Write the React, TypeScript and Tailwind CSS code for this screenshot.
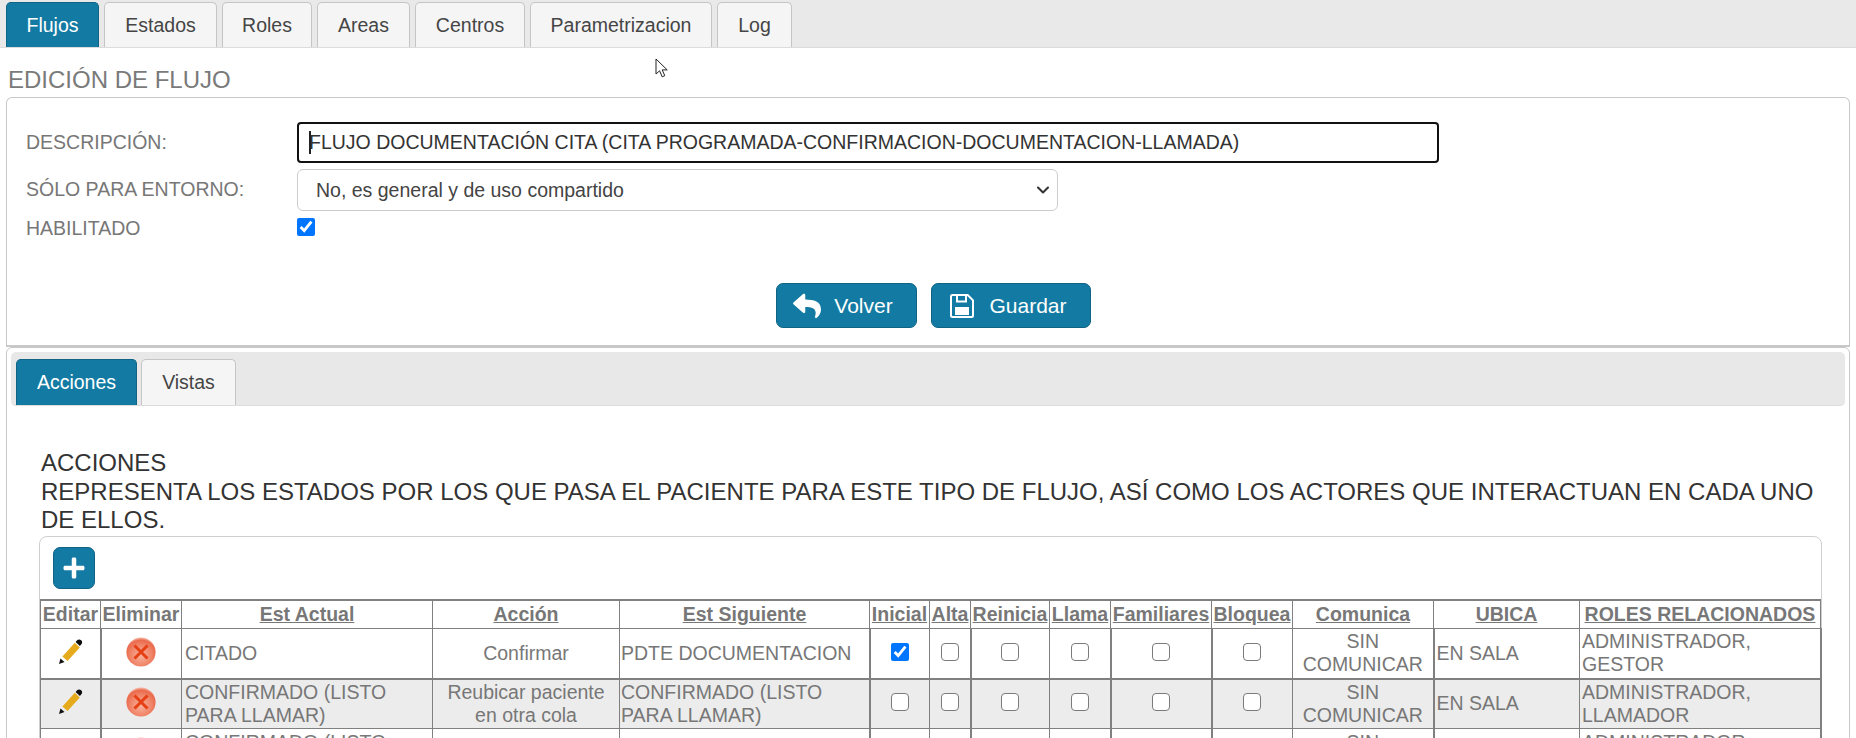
import { ChevronDown } from "lucide-react";
import { FaPlus, FaReply } from "react-icons/fa";

const mainTabs = [
  { label: "Flujos", width: "w-[93px]" },
  { label: "Estados", width: "w-[113px]" },
  { label: "Roles", width: "w-[90px]" },
  { label: "Areas", width: "w-[93px]" },
  { label: "Centros", width: "w-[110px]" },
  { label: "Parametrizacion", width: "w-[182px]" },
  { label: "Log", width: "w-[75px]" },
];

const columns = [
  { label: "Editar", width: "w-[60px]", line: false },
  { label: "Eliminar", width: "w-[81px]", line: false },
  { label: "Est Actual", width: "w-[251px]", line: true },
  { label: "Acción", width: "w-[187px]", line: true },
  { label: "Est Siguiente", width: "w-[250px]", line: true },
  { label: "Inicial", width: "w-[60px]", line: true },
  { label: "Alta", width: "w-[41px]", line: true },
  { label: "Reinicia", width: "w-[79px]", line: true },
  { label: "Llama", width: "w-[61px]", line: true },
  { label: "Familiares", width: "w-[101px]", line: true },
  { label: "Bloquea", width: "w-[81px]", line: true },
  { label: "Comunica", width: "w-[141px]", line: true },
  { label: "UBICA", width: "w-[146px]", line: true },
  { label: "ROLES RELACIONADOS", width: "w-[241px]", line: true },
];

const rows = [
  {
    actual: "CITADO",
    accion: "Confirmar",
    siguiente: "PDTE DOCUMENTACION",
    inicial: true,
    roles: "ADMINISTRADOR, GESTOR",
  },
  {
    actual: "CONFIRMADO (LISTO PARA LLAMAR)",
    accion: "Reubicar paciente en otra cola",
    siguiente: "CONFIRMADO (LISTO PARA LLAMAR)",
    inicial: false,
    roles: "ADMINISTRADOR, LLAMADOR",
  },
  {
    actual: "CONFIRMADO (LISTO PARA LLAMAR)",
    accion: "",
    siguiente: "",
    inicial: false,
    roles: "ADMINISTRADOR, LLAMADOR",
  },
];

const thin = "border border-[#808080]";
const thick = "border border-r-2 border-[#808080]";

function PencilIcon() {
  return (
    <svg width="26" height="28" viewBox="0 0 26 28" className="mx-auto mb-[3px] block">
      <path d="M2 26l1.5-5.5 4 3.6z" fill="#111" />
      <path d="M5.4 18.4L17.8 4.8l5 4.6L10.6 23z" fill="#e5ab1c" />
      <path d="M18.6 3.9l1.5-1.7c1-1 2.9-1 4 0 1.2 1 1.4 2.7.4 3.9l-1.6 1.8z" fill="#0c0c0c" />
    </svg>
  );
}

function DeleteIcon({ id }: { id: string }) {
  return (
    <svg width="30" height="30" viewBox="0 0 30 30" className="mx-auto mb-[3px] block">
      <defs>
        <radialGradient id={id} cx="50%" cy="62%" r="60%">
          <stop offset="0%" stopColor="#f8b49e" />
          <stop offset="60%" stopColor="#f08468" />
          <stop offset="88%" stopColor="#ea6a4c" />
          <stop offset="100%" stopColor="#f4b3a2" />
        </radialGradient>
      </defs>
      <circle cx="15" cy="15" r="14.6" fill={`url(#${id})`} />
      <path d="M8.5 8.5l13 13M21.5 8.500l-13 13" stroke="#e63f14" strokeWidth="3" />
    </svg>
  );
}

function SaveIcon() {
  return (
    <svg width="24" height="24" viewBox="0 0 24 24" className="shrink-0">
      <path
        d="M2.5 1h15.2L23 6.3v15.2a1.5 1.5 0 0 1-1.5 1.5h-19A1.5 1.5 0 0 1 1 21.500v-19A1.500 1.500 0 0 1 2.500 1z"
        fill="none"
        stroke="#fff"
        strokeWidth="2"
      />
      <rect x="7" y="1" width="9" height="6.500" fill="none" stroke="#fff" strokeWidth="2" />
      <rect x="5" y="13" width="14" height="8" fill="#fff" />
    </svg>
  );
}

function RowCheck({ checked = false }: { checked?: boolean }) {
  return (
    <input
      type="checkbox"
      defaultChecked={checked}
      className={`block mx-auto mb-[3px] w-[18px] h-[18px] ${
        checked
          ? "accent-[#0075ff]"
          : "appearance-none rounded-[4px] border-[1.5px] border-[#7b7b7b] bg-white"
      }`}
    />
  );
}

export default function App() {
  return (
    <div className="relative w-[1856px] h-[738px] overflow-hidden bg-white font-['Liberation_Sans',Arial,sans-serif] text-[19.5px] text-[#777]">
      <nav className="flex items-end gap-[5px] h-[48px] pl-[6px] bg-[#e9e9e9] border-b border-[#dcdcdc]">
        {mainTabs.map((tab, i) => (
          <div
            key={tab.label}
            className={`${tab.width} h-[45px] pt-[2px] flex items-center justify-center rounded-t-[5px] border border-b-0 ${
              i === 0
                ? "bg-[#137ba3] border-[#0f6385] text-white"
                : "bg-[#f5f5f5] border-[#c5c5c5] text-[#454545]"
            }`}
          >
            {tab.label}
          </div>
        ))}
      </nav>

      <h1 className="ml-[8px] mt-[19px] h-[30px] text-[24px] leading-[25px] font-normal text-[#7a7a7a]">
        EDICIÓN DE FLUJO
      </h1>

      <section className="mx-[6px] h-[250px] rounded-t-[6px] border border-b-2 border-[#c8c8c8] pt-[24px] pl-[19px]">
        <div className="flex items-center h-[41px]">
          <label className="w-[271px]">DESCRIPCIÓN:</label>
          <div className="relative">
            <input
              readOnly
              value="FLUJO DOCUMENTACIÓN CITA (CITA PROGRAMADA-CONFIRMACION-DOCUMENTACION-LLAMADA)"
              className="w-[1142px] h-[41px] px-[10px] rounded-[4px] border-2 border-[#111] text-[19.5px] text-[#333] bg-white outline-none"
            />
            <span className="absolute left-[12px] top-[9px] w-[2px] h-[23px] bg-[#222]" />
          </div>
        </div>
        <div className="flex items-center h-[42px] mt-[6px]">
          <label className="w-[271px]">SÓLO PARA ENTORNO:</label>
          <div className="relative">
            <select className="appearance-none w-[761px] h-[42px] pl-[18px] pr-[30px] pt-[2px] rounded-[6px] border border-[#ccc] bg-white text-[#444] text-[19.5px]">
              <option>No, es general y de uso compartido</option>
            </select>
            <ChevronDown
              className="absolute right-[5px] top-[11px] w-[20px] h-[20px] text-[#333]"
              strokeWidth={2.5}
            />
          </div>
        </div>
        <div className="flex items-center h-[24px] mt-[6px]">
          <label className="w-[271px]">HABILITADO</label>
          <input type="checkbox" defaultChecked className="w-[18px] h-[18px] -mt-[5px] accent-[#0075ff]" />
        </div>
        <div className="flex justify-center gap-[14px] mt-[42px] pr-[9px] text-[21px]">
          <button className="w-[141px] h-[45px] pr-[6px] flex items-center justify-center gap-[13px] rounded-[7px] border border-[#0f6385] bg-[#137ba3] text-white">
            <FaReply className="w-[28px] h-[28px]" />
            Volver
          </button>
          <button className="w-[160px] h-[45px] pr-[4px] flex items-center justify-center gap-[15px] rounded-[7px] border border-[#0f6385] bg-[#137ba3] text-white">
            <SaveIcon />
            Guardar
          </button>
        </div>
      </section>

      <section className="mx-[6px] h-[500px] rounded-t-[6px] border border-[#c8c8c8] px-[4px] pt-[4px]">
        <div className="flex items-end gap-[4px] h-[54px] pl-[5px] rounded-[5px] bg-[#e8e8e8] border-b border-[#dcdcdc]">
          <div className="w-[121px] h-[46px] flex items-center justify-center rounded-t-[5px] border border-b-0 border-[#0f6385] bg-[#137ba3] text-white">
            Acciones
          </div>
          <div className="w-[95px] h-[46px] flex items-center justify-center rounded-t-[5px] border border-b-0 border-[#c5c5c5] bg-[#f5f5f5] text-[#454545]">
            Vistas
          </div>
        </div>

        <div className="mt-[43px] ml-[30px] mr-[20px] text-[24px] leading-[28.5px] text-[#333]">
          <p>ACCIONES</p>
          <p>
            REPRESENTA LOS ESTADOS POR LOS QUE PASA EL PACIENTE PARA ESTE TIPO DE FLUJO, ASÍ COMO LOS ACTORES QUE
            INTERACTUAN EN CADA UNO DE ELLOS.
          </p>
        </div>

        <div className="mt-[1px] ml-[28px] w-[1783px] rounded-t-[8px] border border-[#cfcfcf] pt-[10px]">
          <button className="ml-[13px] mb-[10px] w-[42px] h-[42px] flex items-center justify-center rounded-[7px] border border-[#0f6385] bg-[#137ba3] text-white">
            <FaPlus className="w-[24px] h-[24px]" />
          </button>
          <table className="table-fixed border-collapse w-[1781px] leading-[23px] border-t-2 border-[#808080]">
            <colgroup>
              {columns.map((col) => (
                <col key={col.label} className={col.width} />
              ))}
            </colgroup>
            <thead>
              <tr className="h-[29px]">
                {columns.map((col) => (
                  <th key={col.label} className={`${thin} px-0 font-bold whitespace-nowrap`}>
                    <span className={col.line ? "underline" : ""}>{col.label}</span>
                  </th>
                ))}
              </tr>
            </thead>
            <tbody>
              {rows.map((row, i) => (
                <tr
                  key={i}
                  className={`h-[50px] ${i === 1 ? "bg-[#ececec]" : "bg-white"} ${
                    i === 0 ? "border-b-2 border-[#808080]" : ""
                  }`}
                >
                  <td className={thick}>
                    <PencilIcon />
                  </td>
                  <td className={thin}>
                    <DeleteIcon id={`del-${i}`} />
                  </td>
                  <td className={`${thin} px-[3px]`}>{row.actual}</td>
                  <td className={`${thin} px-[8px] text-center`}>{row.accion}</td>
                  <td className={`${thick} px-[1px]`}>{row.siguiente}</td>
                  <td className={thin}>
                    <RowCheck checked={row.inicial} />
                  </td>
                  <td className={thick}>
                    <RowCheck />
                  </td>
                  <td className={thin}>
                    <RowCheck />
                  </td>
                  <td className={thick}>
                    <RowCheck />
                  </td>
                  <td className={thick}>
                    <RowCheck />
                  </td>
                  <td className={thin}>
                    <RowCheck />
                  </td>
                  <td className={`${thick} px-[1px] text-center`}>SIN COMUNICAR</td>
                  <td className={`${thin} px-[2px]`}>EN SALA</td>
                  <td className={`${thick} px-[2px]`}>{row.roles}</td>
                </tr>
              ))}
            </tbody>
          </table>
        </div>
      </section>

      <svg width="14" height="21" viewBox="0 0 14 21" className="absolute left-[655px] top-[58px]">
        <path d="M1 1v15l3.600-3.200 2.600 6 2.600-1.100-2.600-5.800h5z" fill="#fff" stroke="#222" strokeWidth="1" />
      </svg>
    </div>
  );
}
